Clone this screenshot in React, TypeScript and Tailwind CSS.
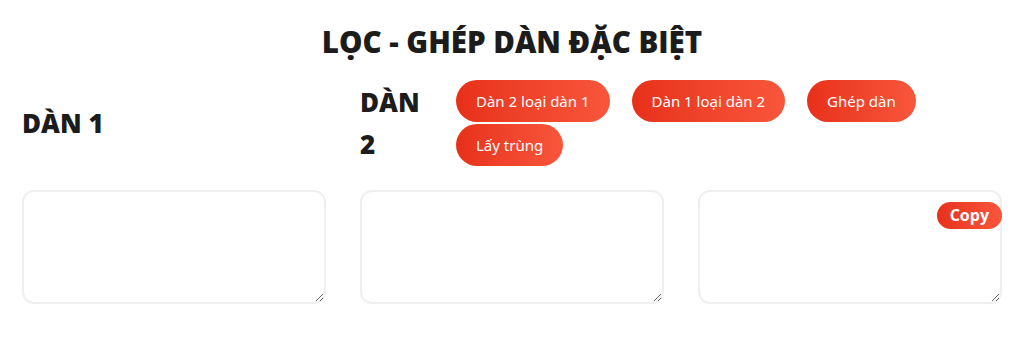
export default function App() {
  const actions = ["Dàn 2 loại dàn 1", "Dàn 1 loại dàn 2", "Ghép dàn", "Lấy trùng"]

  return (
    <div className="min-h-screen bg-white px-[22px] pt-[22px] text-[#1c1c1c]" style={{ fontFamily: '"Open Sans", "Noto Sans", sans-serif' }}>
      <h1 className="text-center text-[29.5px] font-extrabold leading-[40px]">LỌC - GHÉP DÀN ĐẶC BIỆT</h1>

      <div className="mt-[18px] grid grid-cols-3 gap-x-[34px]">
        {/* tiêu đề */}
        <div className="flex h-[86px] items-center">
          <h2 className="text-[26px] font-extrabold leading-[42px]">DÀN 1</h2>
        </div>
        <div className="col-span-2 flex h-[86px] items-center">
          <h2 className="w-[62px] shrink-0 text-[26px] font-extrabold leading-[42px]">DÀN 2</h2>
          <div className="ml-[34px] flex flex-wrap gap-x-[22px] gap-y-[2px]">
            {actions.map((label) => (
              <button
                key={label}
                className="h-[42px] rounded-full bg-gradient-to-r from-[#e8301a] to-[#f8563b] px-[20px] text-[15px] text-white"
                style={{ fontFamily: '"Noto Sans", "Open Sans", sans-serif' }}
              >
                {label}
              </button>
            ))}
          </div>
        </div>

        {/* ô nhập */}
        <div className="mt-[24px]">
          <textarea className="block h-[114px] w-full resize rounded-xl border-2 border-[#efefef] p-2 outline-none" />
        </div>
        <div className="mt-[24px]">
          <textarea className="block h-[114px] w-full resize rounded-xl border-2 border-[#efefef] p-2 outline-none" />
        </div>
        <div className="relative mt-[24px]">
          <textarea className="block h-[114px] w-full resize rounded-xl border-2 border-[#efefef] p-2 outline-none" />
          <button className="absolute right-0 top-[12px] h-[27px] rounded-full bg-gradient-to-r from-[#e8301a] to-[#f8563b] px-[13px] text-[16px] font-bold leading-[27px] text-white">
            Copy
          </button>
        </div>
      </div>
    </div>
  )
}
